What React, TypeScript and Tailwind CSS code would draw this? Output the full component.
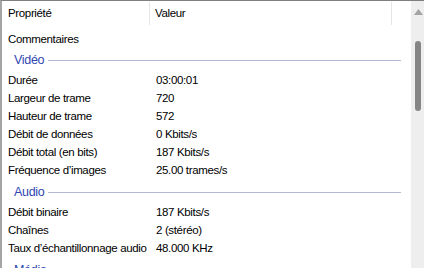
import React from "react";

const font = { fontFamily: '"Segoe UI", "Liberation Sans", Arial, sans-serif' };

type Row = [string, string];

function DataRow({ k, v }: { k: string; v: string }) {
  return (
    <div className="flex h-[18px] shrink-0 items-center text-[11.5px] tracking-[-0.35px] text-black">
      <div className="w-[148px] shrink-0 pl-[6px] whitespace-nowrap">{k}</div>
      <div className="pl-[6px] whitespace-nowrap">{v}</div>
    </div>
  );
}

function Group({ title, h }: { title: string; h: string }) {
  return (
    <div className={`flex shrink-0 items-end pl-[12px] pr-[10px] ${h}`}>
      <div className="flex h-[23px] flex-1 items-center">
        <span className="text-[12.5px] tracking-[-0.3px] text-[#2f46b3] whitespace-nowrap">{title}</span>
        <div className="ml-[4px] h-px flex-1 bg-[#b3b8d6]" />
      </div>
    </div>
  );
}

export default function App() {
  const video: Row[] = [
    ["Durée", "03:00:01"],
    ["Largeur de trame", "720"],
    ["Hauteur de trame", "572"],
    ["Débit de données", "0 Kbits/s"],
    ["Débit total (en bits)", "187 Kbits/s"],
    ["Fréquence d’images", "25.00 trames/s"],
  ];
  const audio: Row[] = [
    ["Débit binaire", "187 Kbits/s"],
    ["Chaînes", "2 (stéréo)"],
    ["Taux d’échantillonnage audio", "48.000 KHz"],
  ];
  return (
    <div
      className="flex h-[268px] w-[424px] overflow-hidden bg-white border-t border-t-[#7f7f7f] border-l-2 border-l-[#a5a5a5]"
      style={font}
    >
      <div className="flex min-w-0 flex-1 flex-col">
        <div className="flex h-[25px] shrink-0 items-center text-[11.5px] tracking-[-0.35px] text-black">
          <div className="flex h-[23px] w-[148px] shrink-0 items-center border-r border-r-[#e5e5e5] pl-[6px]">
            Propriété
          </div>
          <div className="flex h-[23px] w-[242px] shrink-0 items-center border-r border-r-[#e5e5e5] pl-[5px]">
            Valeur
          </div>
        </div>
        <div className="h-[5px] shrink-0" />
        <DataRow k="Commentaires" v="" />
        <Group title="Vidéo" h="h-[23px]" />
        {video.map(([k, v]) => (
          <DataRow key={k} k={k} v={v} />
        ))}
        <Group title="Audio" h="h-[24px]" />
        {audio.map(([k, v]) => (
          <DataRow key={k} k={k} v={v} />
        ))}
        <Group title="Média" h="h-[24px]" />
      </div>
      <div className="relative w-[13px] shrink-0 bg-[#eeeeee]">
        <svg className="absolute left-[3px] top-[8px]" width="9" height="6" viewBox="0 0 9 6">
          <path d="M4.5 0 L9 6 L0 6 Z" fill="#a3a3a3" />
        </svg>
        <div className="absolute left-[4px] top-[40px] h-[70px] w-[6px] rounded-[3px] bg-[#858585]" />
      </div>
    </div>
  );
}
